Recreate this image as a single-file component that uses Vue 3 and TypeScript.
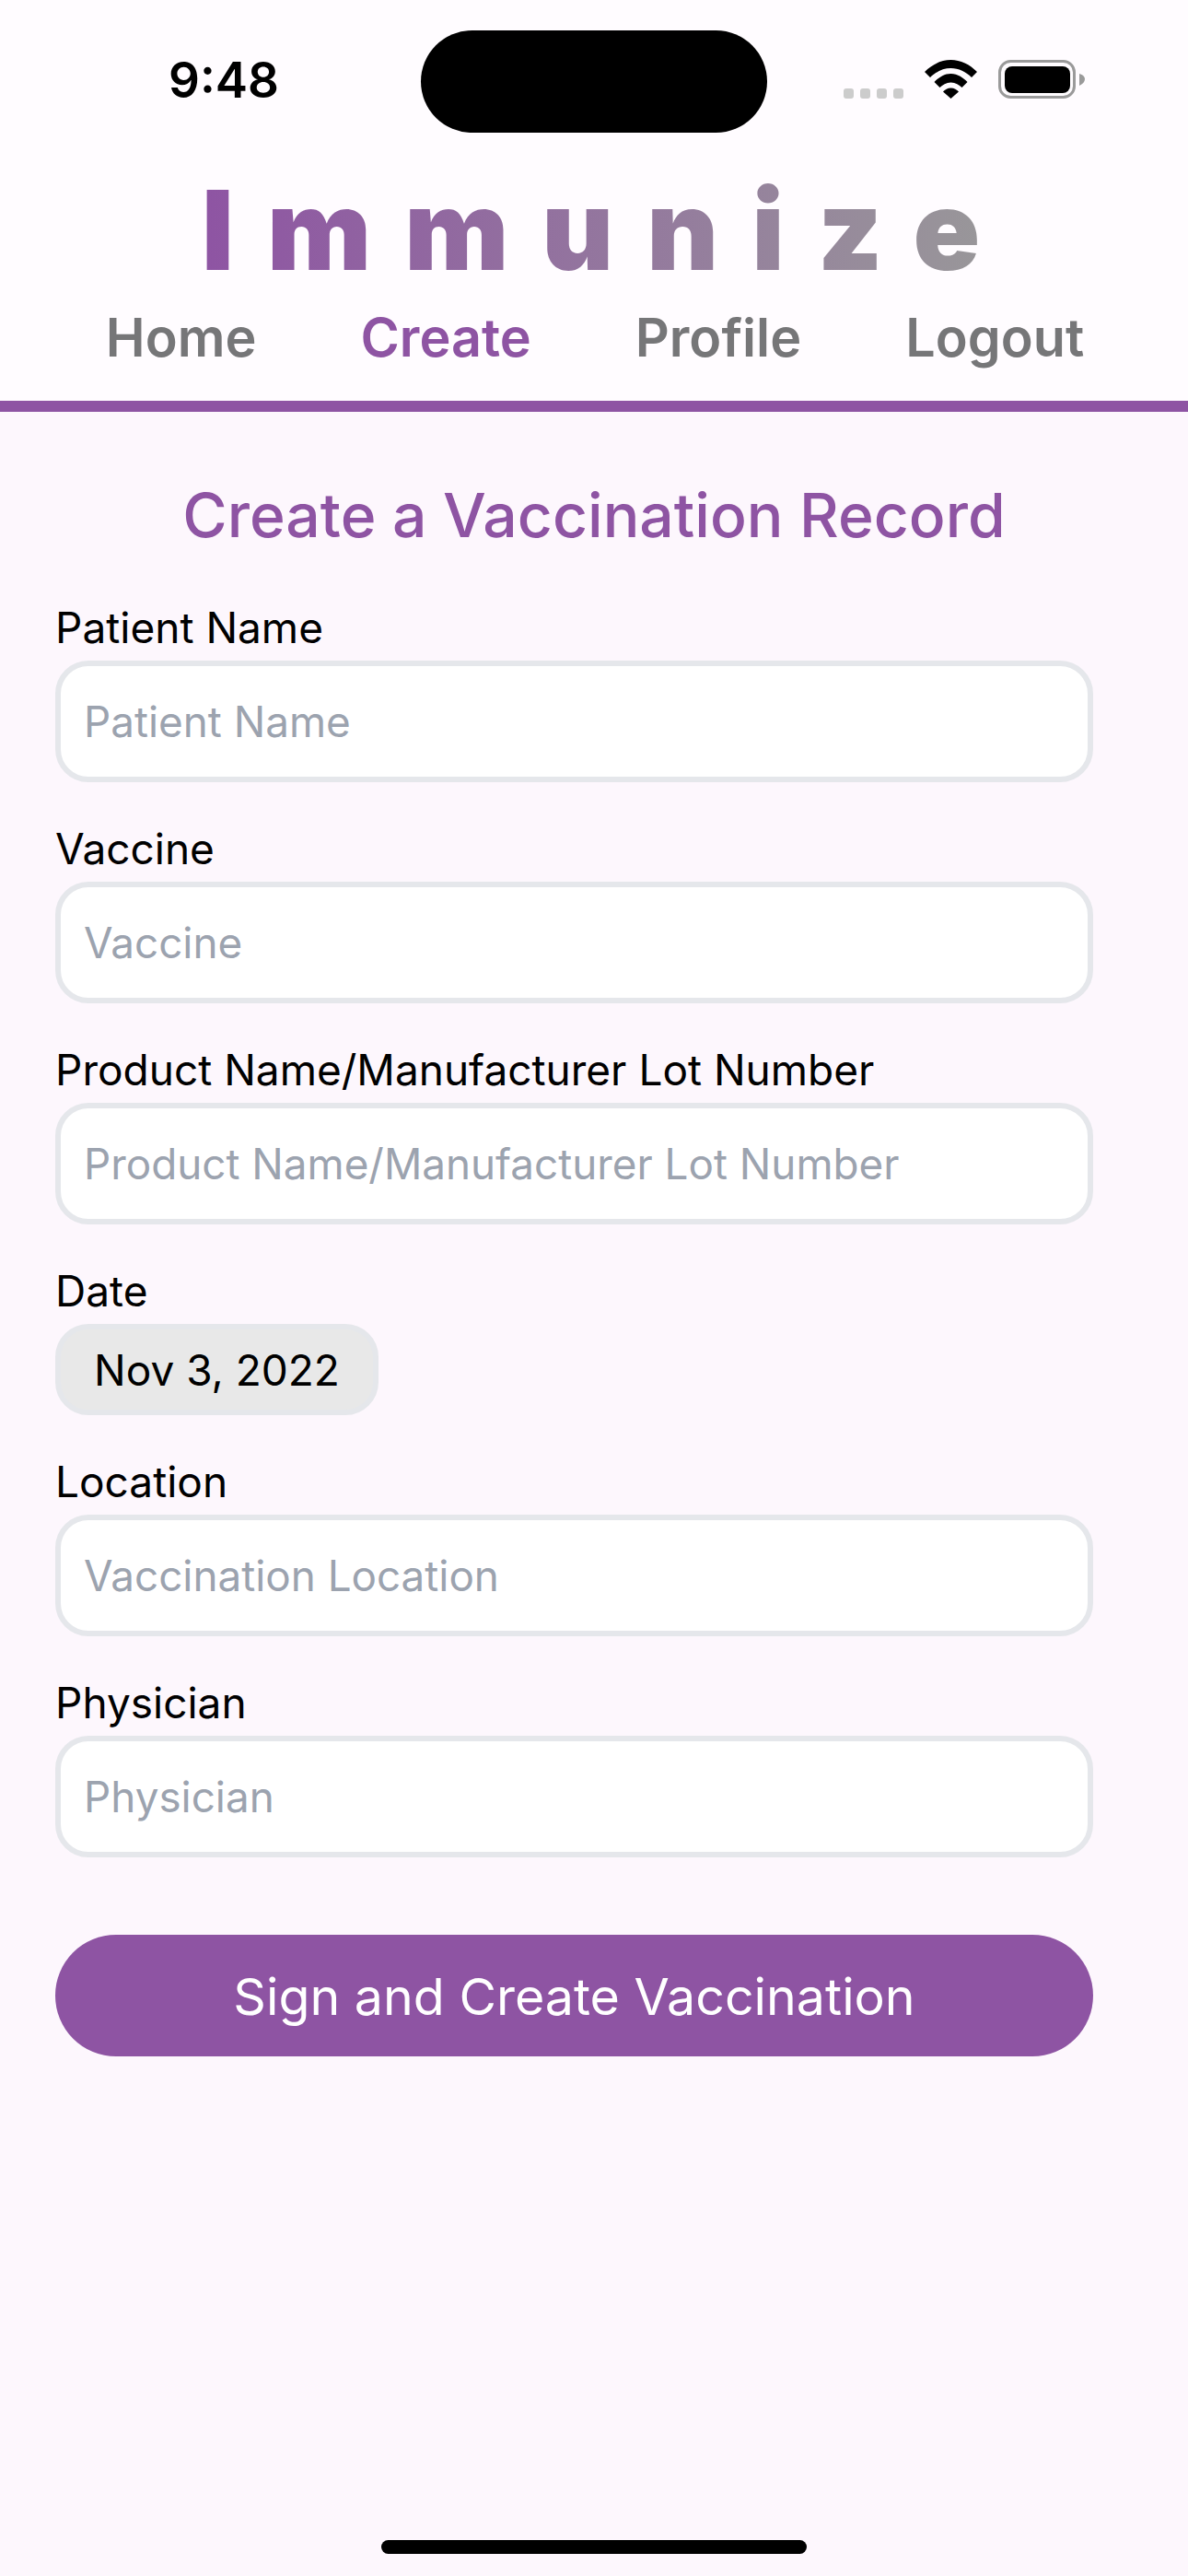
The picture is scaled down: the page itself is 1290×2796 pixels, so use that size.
<script setup lang="ts">
import { ref } from 'vue'

const navItems = ['Home', 'Create', 'Profile', 'Logout']
const active = ref<string>('Create')

const topFields = [
  { label: 'Patient Name', placeholder: 'Patient Name' },
  { label: 'Vaccine', placeholder: 'Vaccine' },
  { label: 'Product Name/Manufacturer Lot Number', placeholder: 'Product Name/Manufacturer Lot Number' },
]
const bottomFields = [
  { label: 'Location', placeholder: 'Vaccination Location' },
  { label: 'Physician', placeholder: 'Physician' },
]
</script>

<template>
  <div class="page">
    <header class="header">
      <div class="status">
        <span class="time">9:48</span>
        <div class="island"></div>
        <div class="status-icons">
          <div class="dots"><i></i><i></i><i></i><i></i></div>
          <svg width="57" height="42" viewBox="0 0 57 42">
            <path d="M0 13C8 5 18 0 28.5 0C39 0 49 5 57 13L51 19C45 13 37 9 28.5 9C20 9 12 13 6 19Z" />
            <path d="M10.5 24C15 19.5 21 15 28.5 15C36 15 42 19.5 46.5 24L40.5 30C37.5 27 33.5 24.5 28.5 24.5C23.5 24.5 19.5 27 16.5 30Z" />
            <path d="M20 34.5C22 32.5 25 30.5 28.5 30.5C32 30.5 35 32.5 37 34.5L28.5 42Z" />
          </svg>
          <svg class="battery" width="94" height="42" viewBox="0 0 94 42">
            <rect x="1.5" y="1.5" width="81" height="39" rx="12" fill="none" stroke="#9a9a9a" stroke-width="3" />
            <rect x="7" y="7" width="71" height="29" rx="8" fill="#000" />
            <path d="M88 15C91.500 16 94 18 94 21C94 24 91.500 26 88 28Z" fill="#9a9a9a" />
          </svg>
        </div>
      </div>
      <h1 class="logo">Immunize</h1>
      <nav class="nav">
        <a v-for="item in navItems" :key="item" :class="{ active: item === active }">{{ item }}</a>
      </nav>
    </header>

    <main class="form">
      <h2 class="title">Create a Vaccination Record</h2>

      <div v-for="f in topFields" :key="f.label" class="field">
        <label>{{ f.label }}</label>
        <input type="text" :placeholder="f.placeholder" />
      </div>

      <div class="field date-field">
        <label>Date</label>
        <div class="date">Nov 3, 2022</div>
      </div>

      <div v-for="f in bottomFields" :key="f.label" class="field">
        <label>{{ f.label }}</label>
        <input type="text" :placeholder="f.placeholder" />
      </div>

      <button class="submit">Sign and Create Vaccination</button>
    </main>

    <div class="home-bar"></div>
  </div>
</template>

<style>
html, body {
  margin: 0;
  background: #fdf7fd;
}
</style>

<style scoped>
.page {
  position: relative;
  width: 1290px;
  height: 2796px;
  overflow: hidden;
  background: #fdf7fd;
  font-family: Inter, "Liberation Sans", sans-serif;
}
.header {
  background: #fffcff;
  border-bottom: 12px solid #8e54a3;
  height: 435px;
}
.status {
  position: relative;
  height: 190px;
}
.time {
  position: absolute;
  left: 183px;
  top: 54px;
  font-size: 53px;
  line-height: 66px;
  font-weight: 600;
  color: #000;
}
.island {
  position: absolute;
  left: 457px;
  top: 33px;
  width: 376px;
  height: 111px;
  border-radius: 56px;
  background: #000;
}
.status-icons {
  position: absolute;
  left: 916px;
  top: 65px;
  display: flex;
  align-items: flex-end;
}
.dots {
  display: flex;
  gap: 7px;
  margin-right: 23px;
}
.dots i {
  width: 11px;
  height: 11px;
  border-radius: 3px;
  background: #cccccc;
}
.battery {
  margin-left: 23px;
}
.logo {
  width: fit-content;
  margin: 0 0 0 219px;
  font-size: 120px;
  line-height: 120px;
  font-weight: 900;
  letter-spacing: 36px;
  color: transparent;
  background: linear-gradient(90deg, #8e54a3, #999999);
  -webkit-background-clip: text;
  background-clip: text;
}
.nav {
  display: flex;
  justify-content: center;
  gap: 113px;
  margin-top: 21px;
  padding-left: 2px;
}
.nav a {
  font-size: 57.5px;
  line-height: 70px;
  font-weight: 600;
  color: #767678;
}
.nav a.active {
  color: #8e54a3;
}
.form {
  padding: 0 103px 0 60px;
}
.title {
  margin: 72px -43px 0 0;
  text-align: center;
  font-size: 66px;
  line-height: 80px;
  font-weight: 500;
  color: #8e54a3;
}
.field {
  margin-bottom: 47px;
}
.title + .field {
  margin-top: 57px;
}
.field label {
  display: block;
  height: 61px;
  font-size: 46px;
  line-height: 51px;
  color: #000;
}
.field input {
  display: block;
  box-sizing: border-box;
  width: 100%;
  height: 132px;
  padding: 0 25px;
  border: 6px solid #e5e7eb;
  border-radius: 36px;
  background: #fff;
  outline: none;
  font-family: inherit;
  font-size: 45.8px;
  color: #000;
}
.field input::placeholder {
  color: #9ca3af;
  opacity: 1;
}
.date-field {
  margin-bottom: 47px;
}
.date {
  box-sizing: border-box;
  width: 351px;
  height: 99px;
  border: 6px solid #e5e7eb;
  border-radius: 36px;
  background: #e8e8e8;
  display: flex;
  align-items: center;
  justify-content: center;
  font-size: 46px;
  color: #000;
}
.submit {
  display: block;
  width: 100%;
  height: 132px;
  margin-top: 84px;
  border: none;
  border-radius: 66px;
  background: #8e54a3;
  color: #fff;
  font-family: inherit;
  font-size: 55.5px;
}
.home-bar {
  position: absolute;
  left: 414px;
  top: 2757px;
  width: 462px;
  height: 15px;
  border-radius: 7.5px;
  background: #000;
}
</style>
